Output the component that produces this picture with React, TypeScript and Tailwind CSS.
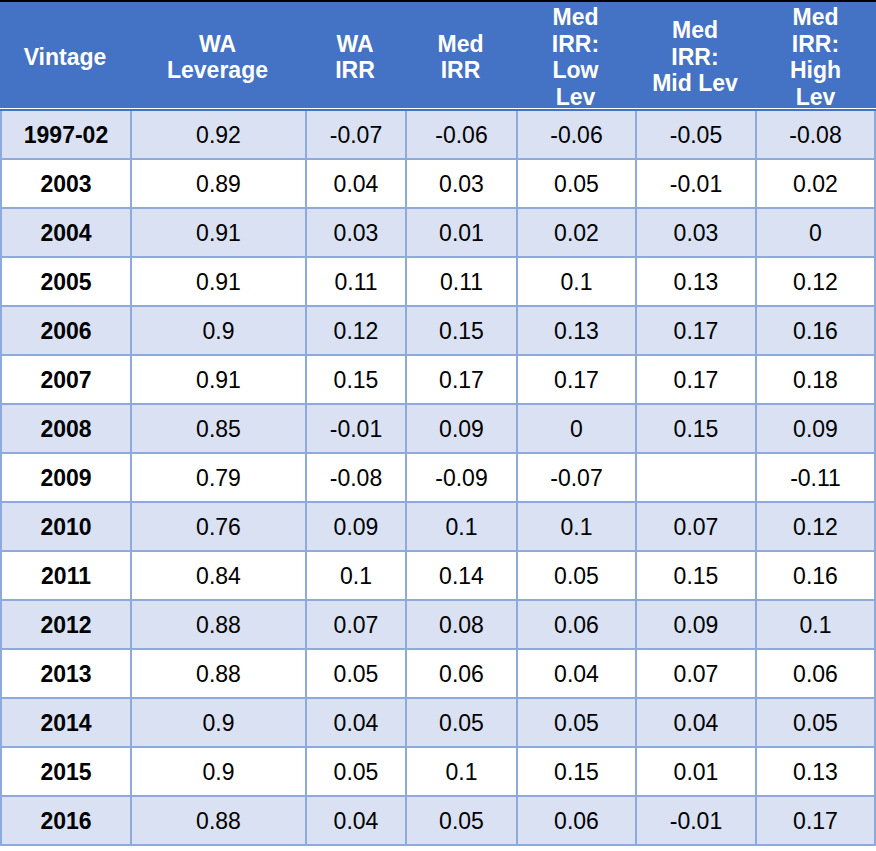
// Leverage / IRR by vintage table, Excel-style blue banding

const columns = 'grid grid-cols-[130px_175px_100px_111px_119px_120px_121px]'

const headers: string[][] = [
  ['Vintage'],
  ['WA', 'Leverage'],
  ['WA', 'IRR'],
  ['Med', 'IRR'],
  ['Med', 'IRR:', 'Low', 'Lev'],
  ['Med', 'IRR:', 'Mid Lev'],
  ['Med', 'IRR:', 'High', 'Lev'],
]

const rows: string[][] = [
  ['1997-02', '0.92', '-0.07', '-0.06', '-0.06', '-0.05', '-0.08'],
  ['2003', '0.89', '0.04', '0.03', '0.05', '-0.01', '0.02'],
  ['2004', '0.91', '0.03', '0.01', '0.02', '0.03', '0'],
  ['2005', '0.91', '0.11', '0.11', '0.1', '0.13', '0.12'],
  ['2006', '0.9', '0.12', '0.15', '0.13', '0.17', '0.16'],
  ['2007', '0.91', '0.15', '0.17', '0.17', '0.17', '0.18'],
  ['2008', '0.85', '-0.01', '0.09', '0', '0.15', '0.09'],
  ['2009', '0.79', '-0.08', '-0.09', '-0.07', '', '-0.11'],
  ['2010', '0.76', '0.09', '0.1', '0.1', '0.07', '0.12'],
  ['2011', '0.84', '0.1', '0.14', '0.05', '0.15', '0.16'],
  ['2012', '0.88', '0.07', '0.08', '0.06', '0.09', '0.1'],
  ['2013', '0.88', '0.05', '0.06', '0.04', '0.07', '0.06'],
  ['2014', '0.9', '0.04', '0.05', '0.05', '0.04', '0.05'],
  ['2015', '0.9', '0.05', '0.1', '0.15', '0.01', '0.13'],
  ['2016', '0.88', '0.04', '0.05', '0.06', '-0.01', '0.17'],
]

function HeaderRow() {
  return (
    <div className="border-b-2 border-[#4472C4]">
      <div className={`${columns} h-[107px] border-b border-white bg-[#4472C4]`}>
        {headers.map((lines, i) => (
          <div
            key={i}
            className="flex h-[106px] flex-col items-center justify-center pt-1 text-center text-[23px] font-bold leading-[26.5px] text-white"
          >
            {lines.map((line) => (
              <span key={line} className="whitespace-nowrap">
                {line}
              </span>
            ))}
          </div>
        ))}
      </div>
    </div>
  )
}

function DataRow({ cells, shaded }: { cells: string[]; shaded: boolean }) {
  return (
    <div className={`${columns} h-[49px]`}>
      {cells.map((value, i) => (
        <div
          key={i}
          className={[
            'flex items-center justify-center border-b-2 border-l-2 border-[#8EA9DB] pt-[2px] text-[23px] leading-none text-black',
            shaded ? 'bg-[#D9E1F2]' : 'bg-white',
            i === 0 ? 'font-bold' : '',
            i === cells.length - 1 ? 'border-r-2' : '',
          ].join(' ')}
        >
          {value}
        </div>
      ))}
    </div>
  )
}

export default function App() {
  return (
    <div className="h-[851px] w-[876px] bg-white font-['Liberation_Sans',Arial,sans-serif]">
      <div className="border-t-2 border-black">
        <HeaderRow />
        {rows.map((cells, i) => (
          <DataRow key={cells[0]} cells={cells} shaded={i % 2 === 0} />
        ))}
      </div>
    </div>
  )
}
